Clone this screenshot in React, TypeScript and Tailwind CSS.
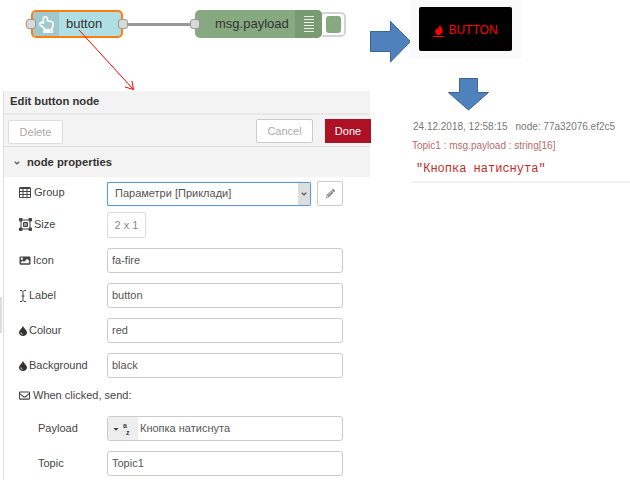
import React from 'react';
import {
  FaAngleDown,
  FaCaretDown,
  FaImage,
  FaPencilAlt,
  FaRegEnvelope,
  FaRegHandPointUp,
} from 'react-icons/fa';

const Port = ({ className }: { className: string }) => (
  <div className={`absolute top-[19px] w-[10px] h-[10px] rounded-[3px] bg-[#d9d9d9] border border-[#999] ${className}`} />
);

// flow canvas with the two nodes
const FlowCanvas = () => (
  <div className="relative h-[91px]">
    <div className="absolute left-[126px] top-[23px] w-[66px] h-[3px] bg-[#999]" />
    <div className="absolute left-[31px] top-[10px] w-[92px] h-[28px] rounded-[5px] border-2 border-[#ff7f0e] bg-[#b0dfe3] flex items-center overflow-hidden">
      <div className="w-[26px] h-full bg-[#9fc9cd] flex items-center justify-center text-white">
        <FaRegHandPointUp className="w-[15px] h-[19px]" />
      </div>
      <span className="ml-[7px] text-[13px] text-[#333]">button</span>
    </div>
    <Port className="left-[26px]" />
    <Port className="left-[118px]" />

    <div className="absolute left-[322px] top-[12px] w-[24px] h-[25px] rounded-r-[5px] border-2 border-l-0 border-[#d4d4d4] bg-white flex items-center justify-center">
      <div className="w-[15px] h-[17px] rounded-[3px] bg-[#87a980]" />
    </div>
    <div className="absolute left-[195px] top-[10px] w-[127px] h-[28px] rounded-[5px] bg-[#87a980] flex items-center overflow-hidden">
      <span className="ml-[20px] text-[13px] text-[#333]">msg.payload</span>
      <div className="ml-auto w-[27px] h-full bg-[#7a9a74] flex flex-col items-center justify-center gap-[2px]">
        <div className="w-[10px] h-[1px] bg-[#e8efe6]" />
        <div className="w-[10px] h-[1px] bg-[#e8efe6]" />
        <div className="w-[10px] h-[1px] bg-[#e8efe6]" />
        <div className="w-[10px] h-[1px] bg-[#e8efe6]" />
        <div className="w-[10px] h-[1px] bg-[#e8efe6]" />
        <div className="w-[10px] h-[1px] bg-[#e8efe6]" />
      </div>
    </div>
    <Port className="left-[190px]" />

    <svg className="absolute left-[70px] top-[25px]" width="75" height="70" viewBox="0 0 75 70" fill="none" stroke="#f00" strokeWidth="1">
      <path d="M9 5 L63 64" />
      <path d="M55 62 L63.5 64.5 L62 56" />
    </svg>
  </div>
);

const TableIcon = () => (
  <svg width="12" height="11" viewBox="0 0 12 11" fill="none" stroke="#444" strokeWidth="1" className="mr-[1px]">
    <path d="M0.5 1.5 H11.5 V10.5 H0.5 Z M0.5 4.5 H11.5 M0.5 7.5 H11.5 M4 1.5 V10.5 M8 1.5 V10.5" />
    <path d="M0.5 1 H11.5" strokeWidth="2" />
  </svg>
);

const SizeIcon = () => (
  <svg width="13" height="13" viewBox="0 0 13 13" fill="none" stroke="#444" strokeWidth="1">
    <path d="M2 2 H11 V11 H2 Z" />
    <path d="M4.5 4.5 H8.5 V8.5 H4.5 Z" fill="#999" />
    <path d="M0.5 0.5 H3 V3 H0.5 Z M10 0.5 H12.5 V3 H10 Z M0.5 10 H3 V12.5 H0.5 Z M10 10 H12.5 V12.5 H10 Z" fill="#444" />
  </svg>
);

const CursorIcon = () => (
  <svg width="8" height="12" viewBox="0 0 8 12" fill="none" stroke="#444" strokeWidth="1">
    <path d="M1 0.5 H3 L4 1.5 L5 0.5 H7 M4 1.5 V10.5 M1 11.5 H3 L4 10.5 L5 11.5 H7 M2.5 6 H5.5" />
  </svg>
);

const TintIcon = () => (
  <svg width="8" height="10" viewBox="0 0 8 10">
    <path d="M4 0 C4.6 2 8 4.2 8 6.6 C8 8.6 6.2 10 4 10 C1.8 10 0 8.6 0 6.6 C0 4.2 3.4 2 4 0 Z" fill="#333" />
    <path d="M2 6.5 C2 7.6 2.7 8.2 3.5 8.3" fill="none" stroke="#fff" strokeWidth="0.9" />
  </svg>
);

const FlameIcon = () => (
  <svg width="8" height="11" viewBox="0 0 8 11" fill="#f00">
    <path d="M4.6 0 C5 2.4 8 3.8 7.6 7 C7.3 9.4 5.6 11 3.6 11 C1.6 11 0 9.4 0.3 7.2 C0.5 5.6 1.5 5 2 3.8 C2.4 4.4 2.6 4.8 2.7 5.4 C3.8 4 4.8 2.2 4.6 0 Z" />
  </svg>
);

const Row = ({ label, icon, indent, className, labelClass, children }: { label: string; icon?: React.ReactNode; indent?: boolean; className?: string; labelClass?: string; children: React.ReactNode }) => (
  <div className={`flex items-center ${className ?? 'h-[25px] mb-[10px]'}`}>
    <div className={`w-[88px] flex items-center gap-[2px] text-[11px] text-[#444] ${indent ? 'pl-[19px]' : ''} ${labelClass ?? ''}`}>
      {icon}
      <span>{label}</span>
    </div>
    {children}
  </div>
);

const Input = ({ value }: { value: string }) => (
  <div className="w-[236px] h-[25px] rounded-[3px] border border-[#ccc] bg-white pl-[4px] flex items-center text-[11px] text-[#555]">
    {value}
  </div>
);

const EditPanel = () => (
  <div className="ml-[3px] w-[367px] h-[389px] border-l border-[#ddd]">
    <div className="h-[22px] pb-[2px] bg-[#f3f3f3] pl-[6px] flex items-center text-[11.25px] font-bold text-[#333]">Edit button node</div>
    <div className="h-[34px] bg-[#f3f3f3] border-t-2 border-[#e8e8e8] border-b border-b-[#ddd] flex items-start pl-[4px] pt-[4px]">
      <div className="w-[55px] h-[24px] mt-[1px] rounded-[2px] border border-[#ddd] bg-white flex items-center justify-center text-[11px] text-[#aaa]">Delete</div>
      <div className="ml-auto w-[57px] h-[24px] rounded-[2px] border border-[#ccc] bg-white flex items-center justify-center text-[11px] text-[#aaa]">Cancel</div>
      <div className="ml-[12px] mr-[-1px] w-[46px] h-[24px] bg-[#ad1123] flex items-center justify-center text-[11px] text-white">Done</div>
    </div>
    <div className="h-[30px] pt-[1px] bg-[#f3f3f3] pl-[9px] flex items-center text-[11.25px] font-bold text-[#333]">
      <FaAngleDown className="w-[8px] h-[8px] text-[#555] mr-[6px]" />
      node properties
    </div>
    <div className="pl-[15px] pt-[4px]">
      <Row label="Group" icon={<TableIcon />} className="h-[25px] mb-[6px]" labelClass="-mt-[2px]">
        <div className="w-[204px] h-[24px] rounded-[2px] border border-[#5b9bd5] bg-white flex items-center text-[11px] text-[#555] shadow-[0_0_1px_#5b9bd5]">
          <span className="pl-[7px]">Параметри [Приклади]</span>
          <div className="ml-auto w-[12px] h-full bg-[#ddd] flex items-center justify-center">
            <FaAngleDown className="w-[8px] h-[8px] text-[#555]" />
          </div>
        </div>
        <div className="ml-[6px] w-[26px] h-[25px] rounded-[2px] border border-[#ccc] bg-white flex items-center justify-center">
          <FaPencilAlt className="w-[9px] h-[9px] text-[#888]" />
        </div>
      </Row>
      <Row label="Size" icon={<SizeIcon />} className="h-[26px] mb-[10px]" labelClass="-mt-[1px]">
        <div className="w-[39px] h-[26px] rounded-[2px] border border-[#ddd] bg-white flex items-center justify-center text-[11px] text-[#888]">2 x 1</div>
      </Row>
      <Row label="Icon" icon={<FaImage className="w-[12px] h-[11px] text-[#444]" />}><Input value="fa-fire" /></Row>
      <Row label="Label" icon={<CursorIcon />}><Input value="button" /></Row>
      <Row label="Colour" icon={<TintIcon />}><Input value="red" /></Row>
      <Row label="Background" icon={<TintIcon />}><Input value="black" /></Row>
      <div className="h-[28px] pb-[14px] flex items-center gap-[3px] text-[11px] text-[#444]">
        <FaRegEnvelope className="w-[11px] h-[11px]" />
        When clicked, send:
      </div>
      <Row label="Payload" indent>
        <div className="w-[236px] h-[25px] rounded-[3px] border border-[#ccc] bg-white flex items-center text-[11px] text-[#555] overflow-hidden">
          <div className="w-[30px] h-full bg-[#eee] flex items-center pl-[4px] gap-[3px] text-[#444]">
            <FaCaretDown className="w-[8px] h-[8px]" />
            <span className="flex flex-col text-[7px] leading-[7px] font-bold">
              <span>a</span>
              <span className="pl-[3px]">z</span>
            </span>
          </div>
          <span className="pl-[2px]">Кнопка натиснута</span>
        </div>
      </Row>
      <Row label="Topic" indent><Input value="Topic1" /></Row>
    </div>
  </div>
);

const BlueArrow = ({ down }: { down?: boolean }) => (
  down ? (
    <svg width="41" height="33" viewBox="0 0 41 33" fill="#4f81bd" stroke="#3a6595" strokeWidth="1">
      <path d="M11.5 0.5 H29.5 V14.5 H40.5 L20.5 32 L0.5 14.5 H11.5 Z" />
    </svg>
  ) : (
    <svg width="41" height="42" viewBox="0 0 41 42" fill="#4f81bd" stroke="#3a6595" strokeWidth="1">
      <path d="M0.5 10.5 H20.5 V0.5 L40.5 20.5 L20.5 41 V30.5 H0.5 Z" />
    </svg>
  )
);

const DebugPane = () => (
  <div className="flex-1 min-w-0">
    <div className="flex items-start">
      <div className="mt-[21px]"><BlueArrow /></div>
      <div className="-ml-[1px] w-[112px] h-[59px] bg-[#fafafa] pt-[7px] pl-[9px]">
        <div className="w-[93px] h-[44px] pt-[2px] rounded-[2px] bg-black flex items-center justify-center gap-[4px] text-[12px] text-[#f00]">
          <span className="flex flex-col items-center gap-[1px]">
            <FlameIcon />
            <span className="w-[11px] h-[1px] bg-[#f00]" />
          </span>
          BUTTON
        </div>
      </div>
    </div>
    <div className="ml-[78px] mt-[15px]"><BlueArrow down /></div>
    <div className="mt-[9px] ml-[40px] border-b-2 border-[#f3f3f3] pb-[5px]">
      <div className="ml-[3px] flex gap-[8px] text-[10px] text-[#777] leading-[14px]">
        <span>24.12.2018, 12:58:15</span>
        <span>node: 77a32076.ef2c5</span>
      </div>
      <div className="ml-[2px] mt-[5px] text-[10px] leading-[14px] text-[#b86b6b]">Topic1 : msg.payload : string[16]</div>
      <div className="ml-[6px] mt-[9px] font-['Liberation_Mono',monospace] text-[12px] leading-[14px] text-[#c02c2c]">"Кнопка натиснута"</div>
    </div>
  </div>
);

export default function App() {
  return (
    <div className="relative w-[630px] h-[480px] overflow-hidden bg-white font-['Liberation_Sans',Arial,sans-serif] flex">
      <div className="w-[370px] shrink-0">
        <FlowCanvas />
        <EditPanel />
      </div>
      <DebugPane />
      <div className="absolute left-0 top-[297px] w-[2px] h-[36px] bg-[#ddd]" />
    </div>
  );
}
